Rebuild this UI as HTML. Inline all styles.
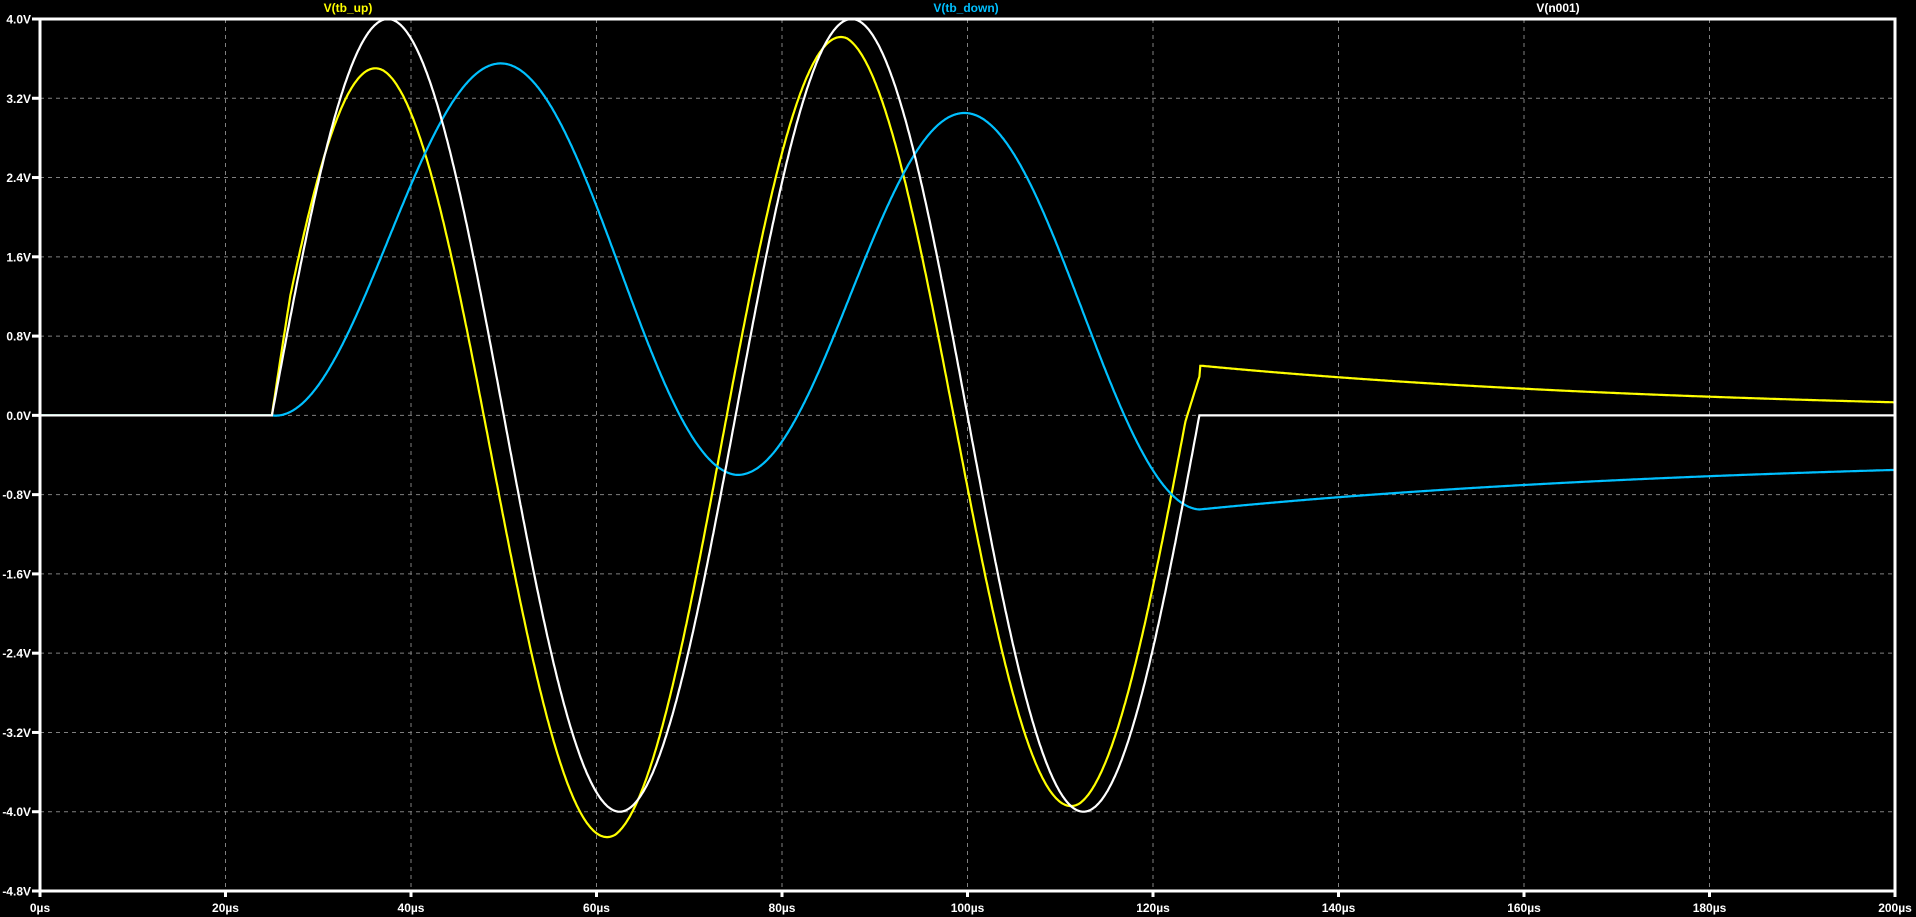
<!DOCTYPE html>
<html><head><meta charset="utf-8"><style>
html,body{margin:0;padding:0;background:#000;width:1916px;height:917px;overflow:hidden}
svg{display:block}
text{font-family:"Liberation Sans",sans-serif;font-weight:bold;font-size:12px}
</style></head><body>
<svg id="s" width="1916" height="917" xmlns="http://www.w3.org/2000/svg">
<rect width="1916" height="917" fill="#000"/>
<g id="grid" stroke="#808080" stroke-width="1" stroke-dasharray="4,4"></g>
<g id="ticks" fill="#fff"></g>
<path id="yl" fill="none" stroke="#ffff00" stroke-width="2.2"/>
<path id="bl" fill="none" stroke="#00c0ff" stroke-width="2.2"/>
<path id="wh" fill="none" stroke="#ffffff" stroke-width="2.2"/>
<rect x="40" y="19" width="1855" height="872" fill="none" stroke="#fff" stroke-width="3"/>
<text x="348" y="12" fill="#ffff00" text-anchor="middle">V(tb_up)</text>
<text x="966" y="12" fill="#00c0ff" text-anchor="middle">V(tb_down)</text>
<text x="1558" y="12" fill="#ffffff" text-anchor="middle">V(n001)</text>
</svg>
<script>
var L=40,R=1895,T=19,B=891;
function X(t){return L+(R-L)*t/200}
function Y(v){return T+(4-v)*(B-T)/8.8}
var g=document.getElementById('grid'),tk=document.getElementById('ticks'),ns='http://www.w3.org/2000/svg';
function el(p,n,a,tx){var e=document.createElementNS(ns,n);for(var k in a)e.setAttribute(k,a[k]);if(tx)e.textContent=tx;p.appendChild(e);}
for(var i=0;i<=10;i++){var t=i*20,x=X(t);
 if(i>0&&i<10)el(g,'line',{x1:x,y1:T,x2:x,y2:B});
 el(tk,'rect',{x:x-1.5,y:B,width:3,height:6});
 el(tk,'text',{x:x,y:912,'text-anchor':'middle'},t+'\u00b5s');}
for(var j=0;j<=11;j++){var v=4-0.8*j,y=Y(v);
 if(j>0&&j<11)el(g,'line',{x1:L,y1:y,x2:R,y2:y});
 el(tk,'rect',{x:L-8,y:y-1.5,width:8,height:3});
 el(tk,'text',{x:31,y:y+4.5,'text-anchor':'end'},(v<-0.001?'-':'')+Math.abs(v).toFixed(1)+'V');}
function w(t){return (t<25||t>125)?0:4*Math.sin(2*Math.PI*(t-25)/50)}
function lin(pts,t){if(t<=pts[0][0]){var a=pts[0],b=pts[1];return a[1]+(b[1]-a[1])*(t-a[0])/(b[0]-a[0]);}
 for(var i=1;i<pts.length;i++)if(t<=pts[i][0]){var a=pts[i-1],b=pts[i];return a[1]+(b[1]-a[1])*(t-a[0])/(b[0]-a[0]);}
 var a=pts[pts.length-2],b=pts[pts.length-1];return a[1]+(b[1]-a[1])*(t-a[0])/(b[0]-a[0]);}
function bl(t){if(t<25)return 0;
 if(t>125)return -0.95+0.56*(1-Math.exp(-(t-125)/60));
 var U=lin([[50,3.55],[100,3.05]],t),Lo=lin([[25,0],[75,-0.6],[125,-0.95]],t);
 return (U+Lo)/2-(U-Lo)/2*Math.cos(2*Math.PI*(t-25)/50);}
function yl(t){if(t<25)return 0;
 if(t>125.3)return 0.5*Math.exp(-(t-125.3)/56);
 if(t>125)return 0.5;
 var ph=2*Math.PI*(t-25)/50;
 var env=Math.min(1,(t-25)/2,(125-t)/1.5);
 var off=lin([[25,0],[37,0],[62,-0.1],[87,0.22],[112,0.12],[125,0.2]],t);
 var v=0.95*(w(t)+0.3*Math.cos(ph)*env)-0.2*bl(t)+off;
 return v;}
function path(f){var d='';for(var t=0;t<=200;t+=0.1){d+=(t?'L':'M')+X(t).toFixed(1)+','+Y(f(t)).toFixed(1);}return d;}
document.getElementById('wh').setAttribute('d',path(w));
document.getElementById('bl').setAttribute('d',path(bl));
document.getElementById('yl').setAttribute('d',path(yl));
</script>
</body></html>
